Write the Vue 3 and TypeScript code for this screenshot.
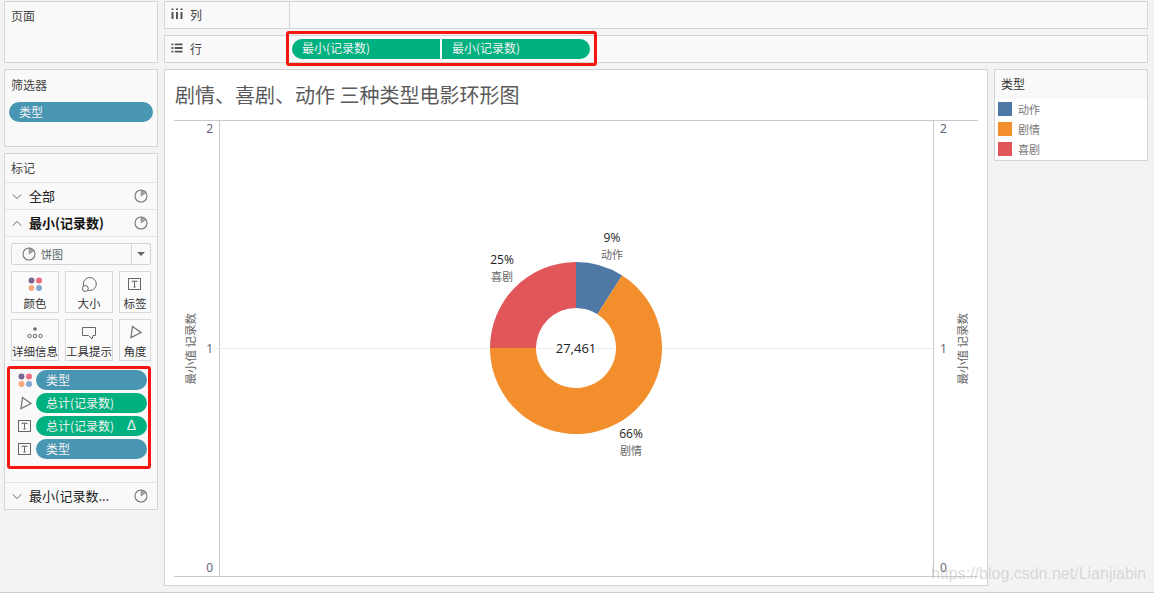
<script setup lang="ts">
interface Slice { name: string; color: string; d: string }
interface Mark { pct: string; name: string; x: number; y: number }
interface Card { label: string; icon: string; width: number }

const slices: Slice[] = [
  { name: '动作', color: '#4e79a7', d: 'M0 -86A86 86 0 0 1 46.1 -72.6L21.4 -33.8A40 40 0 0 0 0 -40Z' },
  { name: '剧情', color: '#f28e2b', d: 'M46.1 -72.6A86 86 0 1 1 -86 0L-40 0A40 40 0 1 0 21.4 -33.8Z' },
  { name: '喜剧', color: '#e15759', d: 'M-86 0A86 86 0 0 1 0 -86L0 -40A40 40 0 0 0 -40 0Z' },
]
const marks: Mark[] = [
  { pct: '9%', name: '动作', x: 392, y: 109 },
  { pct: '25%', name: '喜剧', x: 282, y: 131 },
  { pct: '66%', name: '剧情', x: 411, y: 305 },
]
const cardRows: Card[][] = [
  [
    { label: '颜色', icon: 'color', width: 48 },
    { label: '大小', icon: 'size', width: 48 },
    { label: '标签', icon: 'text', width: 32 },
  ],
  [
    { label: '详细信息', icon: 'detail', width: 48 },
    { label: '工具提示', icon: 'tip', width: 48 },
    { label: '角度', icon: 'angle', width: 32 },
  ],
]
const fields = [
  { icon: 'color', label: '类型', kind: 'blue', delta: false },
  { icon: 'angle', label: '总计(记录数)', kind: 'green', delta: false },
  { icon: 'text', label: '总计(记录数)', kind: 'green', delta: true },
  { icon: 'text', label: '类型', kind: 'blue', delta: false },
]
const ticks = ['2', '1', '0']
const cardStyle = (c: Card) => ({ width: c.width + 'px' })
const markStyle = (m: Mark) => ({ left: m.x + 'px', top: m.y + 'px' })
</script>

<template>
  <div class="page">
    <aside class="side">
      <section class="panel pages"><h3 class="ptitle">页面</h3></section>
      <section class="panel filters">
        <h3 class="ptitle">筛选器</h3>
        <div class="pill blue filter-pill">类型</div>
      </section>
      <section class="panel marks-panel">
        <h3 class="ptitle marks-title">标记</h3>
        <div class="mrow">
          <svg class="chev" viewBox="0 0 12 8"><path d="M1 1.5L6 6.5L11 1.5" /></svg>
          <span class="mname">全部</span>
          <svg class="pie" viewBox="0 0 14 14"><circle cx="7" cy="7" r="6" /><path class="wedge" d="M7 7V1A6 6 0 0 1 12 3.7Z" /></svg>
        </div>
        <div class="mrow">
          <svg class="chev" viewBox="0 0 12 8"><path d="M1 6.5L6 1.5L11 6.5" /></svg>
          <b class="mname">最小(记录数)</b>
          <svg class="pie" viewBox="0 0 14 14"><circle cx="7" cy="7" r="6" /><path class="wedge" d="M7 7V1A6 6 0 0 1 12 3.7Z" /></svg>
        </div>
        <div class="dropdown">
          <svg class="pie dd-pie" viewBox="0 0 14 14"><circle cx="7" cy="7" r="6" /><path class="wedge" d="M7 7V1A6 6 0 0 1 12 3.7Z" /></svg>
          <span class="dd-text">饼图</span>
          <span class="dd-btn"><i class="caret"></i></span>
        </div>
        <div v-for="(row, r) in cardRows" :key="r" class="cards">
          <div v-for="c in row" :key="c.label" class="card" :style="cardStyle(c)">
            <svg class="cicon" viewBox="0 0 16 16">
              <template v-if="c.icon === 'color'">
                <circle cx="4.5" cy="4.5" r="3" fill="#7b6591" /><circle cx="12" cy="4.5" r="3" fill="#ee6c80" />
                <circle cx="4.5" cy="12" r="3" fill="#f4a97f" /><circle cx="12" cy="12" r="3" fill="#83a8d2" />
              </template>
              <template v-else-if="c.icon === 'size'">
                <circle class="ln" cx="8.8" cy="8" r="6.5" /><circle class="ln on-white" cx="4.3" cy="12.5" r="3" />
              </template>
              <template v-else-if="c.icon === 'text'">
                <rect class="ln" x="1.5" y="2.5" width="12" height="11" /><path class="ln" d="M5 6V5.2H10V6M7.5 5.2V11M6.3 11H8.7" />
              </template>
              <template v-else-if="c.icon === 'detail'">
                <circle cx="8" cy="5" r="1.8" fill="#666" /><circle class="ln" cx="2.5" cy="12" r="1.7" /><circle class="ln" cx="8" cy="12" r="1.7" /><circle class="ln" cx="13.5" cy="12" r="1.7" />
              </template>
              <template v-else-if="c.icon === 'tip'">
                <path class="ln" d="M1.5 3.5H14.5V11.5H12L11 15L7.5 11.5H1.5Z" />
              </template>
              <template v-else>
                <path class="ln angle" d="M5.5 2.5L14 8.5L4 13.5Z" />
              </template>
            </svg>
            <span class="clabel">{{ c.label }}</span>
          </div>
        </div>
        <div class="redbox fields">
          <div v-for="(f, i) in fields" :key="i" class="field">
            <svg class="ficon" viewBox="0 0 16 16">
              <template v-if="f.icon === 'color'">
                <circle cx="4.5" cy="4.5" r="3" fill="#7b6591" /><circle cx="12" cy="4.5" r="3" fill="#ee6c80" />
                <circle cx="4.5" cy="12" r="3" fill="#f4a97f" /><circle cx="12" cy="12" r="3" fill="#83a8d2" />
              </template>
              <template v-else-if="f.icon === 'text'">
                <rect class="ln" x="1.5" y="2.5" width="12" height="11" /><path class="ln" d="M5 6V5.2H10V6M7.5 5.2V11M6.3 11H8.7" />
              </template>
              <template v-else>
                <path class="ln angle" d="M5.5 2.5L14 8.5L4 13.5Z" />
              </template>
            </svg>
            <div class="pill field-pill" :class="f.kind">
              <span>{{ f.label }}</span>
              <span v-if="f.delta" class="delta">Δ</span>
            </div>
          </div>
        </div>
        <div class="mrow last">
          <svg class="chev" viewBox="0 0 12 8"><path d="M1 1.5L6 6.5L11 1.5" /></svg>
          <span class="mname">最小(记录数...</span>
          <svg class="pie" viewBox="0 0 14 14"><circle cx="7" cy="7" r="6" /><path class="wedge" d="M7 7V1A6 6 0 0 1 12 3.7Z" /></svg>
        </div>
      </section>
    </aside>

    <main class="main">
      <div class="shelf">
        <div class="shelf-label divided">
          <svg class="shelf-ico" viewBox="0 0 12 12"><path d="M1.5 0.5V2M1.5 4V11M6 0.5V2M6 4V11M10.5 0.5V2M10.5 4V11" /></svg>
          <span>列</span>
        </div>
      </div>
      <div class="shelf">
        <div class="shelf-label">
          <svg class="shelf-ico" viewBox="0 0 13 12"><path d="M0.5 2H2.5M4 2H12.5M0.5 6H2.5M4 6H12.5M0.5 10H2.5M4 10H12.5" /></svg>
          <span>行</span>
        </div>
        <div class="redbox rows">
          <div class="pill green shelf-pill first">最小(记录数)</div>
          <div class="pill green shelf-pill second">最小(记录数)</div>
        </div>
      </div>
      <div class="content">
        <section class="viz">
          <h1 class="vtitle">剧情、喜剧、动作 三种类型电影环形图</h1>
          <div class="frame">
            <div class="axis left">
              <span class="atitle">最小值 记录数</span>
              <div class="ticks"><span v-for="t in ticks" :key="t">{{ t }}</span></div>
            </div>
            <div class="plot">
              <i class="midline"></i>
              <svg class="donut" viewBox="-86 -86 172 172">
                <path v-for="s in slices" :key="s.name" :d="s.d" :fill="s.color" />
              </svg>
              <span class="total">27,461</span>
              <div v-for="m in marks" :key="m.name" class="mark" :style="markStyle(m)">
                <span class="pct">{{ m.pct }}</span>
                <span class="mk">{{ m.name }}</span>
              </div>
            </div>
            <div class="axis right">
              <div class="ticks"><span v-for="t in ticks" :key="t">{{ t }}</span></div>
              <span class="atitle">最小值 记录数</span>
            </div>
          </div>
        </section>
        <section class="legend">
          <h3 class="ltitle">类型</h3>
          <div class="lrows">
            <div v-for="s in slices" :key="s.name" class="lrow">
              <i class="swatch" :style="{ background: s.color }"></i>
              <span>{{ s.name }}</span>
            </div>
          </div>
        </section>
      </div>
    </main>
    <span class="watermark">https://blog.csdn.net/Lianjiabin</span>
  </div>
</template>

<style scoped>
.page {
  position: relative;
  width: 1154px;
  height: 593px;
  box-sizing: border-box;
  display: flex;
  gap: 6px;
  padding: 1px 6px 0 4px;
  background: #f3f3f3;
  border-bottom: 1px solid #cfcfcf;
  overflow: hidden;
  font-family: "Noto Sans CJK SC", "Noto Sans", sans-serif;
  color: #333;
}
.side { width: 154px; display: flex; flex-direction: column; gap: 6px; }
.panel { box-sizing: border-box; border: 1px solid #d4d4d4; background: #f9f9f9; }
.pages { height: 62px; }
.pages .ptitle { padding-top: 6px; }
.filters { height: 78px; }
.marks-panel { height: 357px; }
.ptitle { margin: 0; padding: 7px 0 0 6px; font-size: 12px; line-height: 16px; font-weight: 400; color: #444; }
.marks-title { height: 29px; box-sizing: border-box; padding-top: 6px; border-bottom: 1px solid #e4e4e4; }
.pill {
  box-sizing: border-box;
  height: 20px;
  line-height: 19px;
  font-size: 12px;
  color: #f2f2f2;
  border-radius: 10px;
  padding-left: 10px;
  white-space: nowrap;
}
.blue { background: #4996b2; }
.green { background: #00b180; }
.filter-pill { width: 144px; margin: 9px 0 0 4px; }
.mrow {
  height: 27px;
  box-sizing: border-box;
  display: flex;
  align-items: center;
  border-bottom: 1px solid #e4e4e4;
  padding: 0 9px 0 7px;
}
.mrow.last { border-bottom: 0; border-top: 1px solid #e4e4e4; margin-top: 13px; height: 27px; }
.mname { flex: 1; margin-left: 7px; font-size: 13px; line-height: 18px; color: #222; white-space: nowrap; }
b.mname { font-weight: 700; color: #111; }
.chev { width: 10px; height: 7px; fill: none; stroke: #666; stroke-width: 1.2; }
.pie { width: 14px; height: 14px; fill: none; stroke: #777; stroke-width: 1.1; }
.wedge { fill: #a3a3a3; stroke: #777; stroke-width: 0.5; }
.dropdown {
  box-sizing: border-box;
  width: 140px;
  height: 22px;
  margin: 6px 0 0 6px;
  border: 1px solid #d4d4d4;
  border-radius: 2px;
  background: #f9f9f9;
  display: flex;
  align-items: center;
}
.dd-pie { margin-left: 10px; }
.dd-text { flex: 1; margin-left: 5px; font-size: 11px; color: #566; }
.dd-btn { width: 18px; height: 20px; border-left: 1px solid #d4d4d4; display: flex; align-items: center; justify-content: center; }
.caret { width: 0; height: 0; border: 4px solid transparent; border-top: 4px solid #666; border-bottom: 0; }
.cards { display: flex; gap: 6px; margin: 6px 0 0 6px; }
.card {
  box-sizing: border-box;
  height: 42px;
  border: 1px solid #d9d9d9;
  background: #fbfbfb;
  display: flex;
  flex-direction: column;
  align-items: center;
}
.cicon { width: 16px; height: 16px; margin-top: 4px; flex: none; }
.clabel { font-size: 11.5px; line-height: 16px; margin-top: 3px; color: #333; white-space: nowrap; }
.ln { fill: none; stroke: #666; stroke-width: 1; }
.angle { stroke: #777; stroke-width: 1.3; }
.on-white { fill: #fbfbfb; }
.redbox { box-sizing: border-box; border: 3px solid #f5160f; border-radius: 3px; }
.fields {
  width: 144px;
  height: 103px;
  margin: 5px 0 0 2px;
  padding: 1px 1px 0 0;
  display: flex;
  flex-direction: column;
  gap: 3px;
}
.field { display: flex; align-items: center; height: 20px; }
.ficon { width: 16px; height: 16px; margin-left: 7px; margin-right: 3px; flex: none; }
.field-pill { width: 111px; display: flex; justify-content: space-between; }
.delta { font-family: "Liberation Sans", sans-serif; font-size: 14px; margin-right: 11px; }
.main { width: 984px; display: flex; flex-direction: column; gap: 6px; }
.shelf {
  box-sizing: border-box;
  height: 28px;
  border: 1px solid #d4d4d4;
  background: #f9f9f9;
  display: flex;
}
.shelf-label {
  box-sizing: border-box;
  width: 125px;
  display: flex;
  align-items: center;
  padding: 0 0 2px 6px;
  font-size: 12px;
  color: #444;
}
.divided { border-right: 1px solid #d4d4d4; }
.shelf-ico { width: 12px; height: 12px; margin-right: 7px; fill: none; stroke: #555; stroke-width: 2; }
.rows {
  width: 311px;
  height: 35px;
  margin: -5px 0 0 -4px;
  padding: 5px 0 0 3px;
  display: flex;
  gap: 2px;
  position: relative;
}
.shelf-pill { width: 148px; padding-left: 10px; line-height: 18px; }
.first { border-radius: 10px 0 0 10px; }
.second { border-radius: 0 10px 10px 0; }
.content { display: flex; gap: 6px; align-items: flex-start; }
.viz {
  box-sizing: border-box;
  width: 824px;
  height: 517px;
  border: 1px solid #d4d4d4;
  background: #fff;
  padding: 0 9px;
}
.vtitle { margin: 0; height: 50px; box-sizing: border-box; padding: 11px 0 0 1px; font-size: 20px; line-height: 28px; font-weight: 400; color: #5a5a5a; white-space: nowrap; }
.frame {
  height: 457px;
  box-sizing: border-box;
  border-top: 1px solid #c9c9c9;
  border-bottom: 1px solid #c9c9c9;
  display: grid;
  grid-template-columns: 45px 715px 44px;
}
.axis { display: flex; }
.axis.left { justify-content: flex-end; }
.atitle {
  writing-mode: vertical-rl;
  text-orientation: sideways;
  transform: rotate(180deg);
  align-self: center;
  font-size: 11.5px;
  line-height: 12px;
  color: #666;
  white-space: nowrap;
}
.axis.left .atitle { margin-right: 10px; }
.axis.right .atitle { margin-left: 9px; }
.ticks {
  width: 13px;
  display: flex;
  flex-direction: column;
  justify-content: space-between;
  font-family: "Noto Sans", sans-serif;
  font-size: 12px;
  line-height: 16px;
  color: #667;
}
.axis.left .ticks { text-align: right; padding-right: 6px; width: 7px; }
.axis.right .ticks { padding-left: 6px; width: 7px; }
.plot { position: relative; border-left: 1px solid #c9c9c9; border-right: 1px solid #c9c9c9; }
.midline { position: absolute; left: -4px; right: -4px; top: 227px; height: 1px; background: #ededed; }
.donut { position: absolute; left: 270px; top: 141px; width: 172px; height: 172px; }
.total { position: absolute; left: 356px; top: 227px; transform: translate(-50%, -50%); font-family: "Open Sans", sans-serif; font-size: 13px; line-height: 16px; color: #222; }
.mark {
  position: absolute;
  transform: translateX(-50%);
  display: flex;
  flex-direction: column;
  align-items: center;
  white-space: nowrap;
}
.pct { font-family: "Open Sans", sans-serif; font-size: 12px; line-height: 16px; color: #222; }
.mk { font-size: 11px; line-height: 17px; color: #666; }
.legend {
  box-sizing: border-box;
  width: 154px;
  height: 92px;
  border: 1px solid #d4d4d4;
  background: #fff;
}
.ltitle { margin: 0; height: 29px; padding-left: 6px; background: #f9f9f9; font-size: 12px; line-height: 28px; font-weight: 400; color: #333; }
.lrows { padding: 3px 0 0 3px; display: flex; flex-direction: column; gap: 6px; }
.lrow { display: flex; align-items: center; height: 14px; font-size: 11px; color: #777; }
.swatch { width: 14px; height: 14px; margin-right: 6px; }
.watermark {
  position: absolute;
  left: 931px;
  top: 562px;
  font-family: "Liberation Sans", sans-serif;
  font-size: 16px;
  line-height: 24px;
  color: rgba(190, 190, 190, 0.55);
  white-space: nowrap;
}
</style>
